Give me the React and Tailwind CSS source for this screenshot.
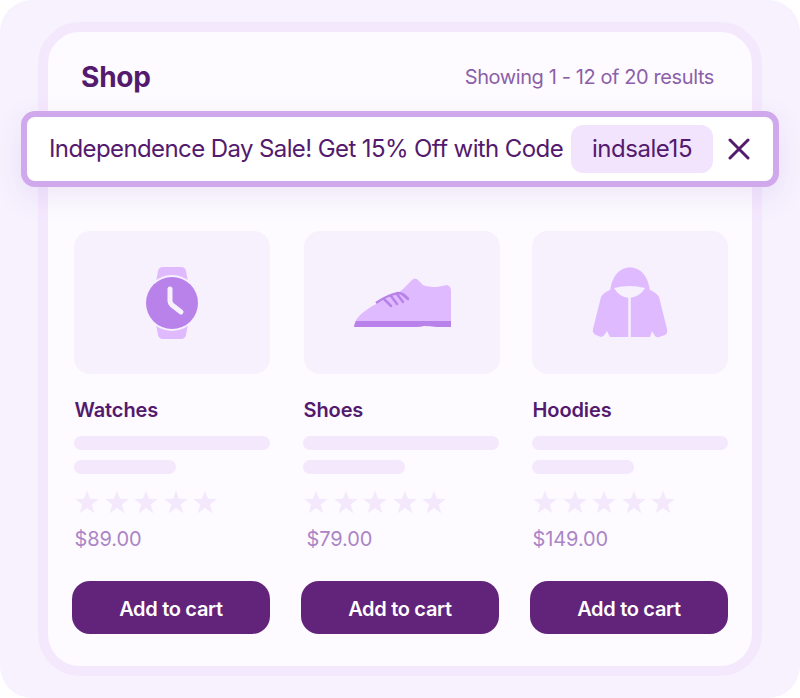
const PRODUCTS = [
  { name: 'Watches', price: '$89.00', icon: <WatchIcon />, tile: 'ml-[2px]', priceClass: 'ml-[2.5px]' },
  { name: 'Shoes', price: '$79.00', icon: <ShoeIcon />, tile: 'ml-[3px]', priceClass: 'ml-[5.5px]' },
  { name: 'Hoodies', price: '$149.00', icon: <HoodieIcon />, tile: 'ml-[2px]', priceClass: 'ml-[2.5px]' },
]

function WatchIcon() {
  return (
    <svg viewBox="142 264 60 76" className="w-[60px] h-[76px]">
      <path d="M156 281 L158 270 Q159 266 163 266 L181 266 Q185 266 186 270 L188 281 Z" fill="#dfbaff" />
      <path d="M156 323 L158 334 Q159 338 163 338 L181 338 Q185 338 186 334 L188 323 Z" fill="#dfbaff" />
      <circle cx="172" cy="302" r="28" fill="#f7f1fe" />
      <circle cx="172" cy="302" r="26" fill="#b982ea" />
      <path d="M170 288 L170 300 Q170 302 172 304 L181 311" fill="none" stroke="#f7f1fe" strokeWidth="5" strokeLinecap="round" strokeLinejoin="round" />
    </svg>
  )
}

function ShoeIcon() {
  return (
    <svg viewBox="352 276 101 52" className="w-[101px] h-[52px]">
      <path d="M355 321 Q358 315 365 310 Q370 306 376 303 L398 292 L403 288 L412 279 Q415 276 418 279 L423 284 Q428 286 437 286 L447 284 Q451 285 451 290 L451 321 Z" fill="#dfbaff" />
      <path d="M354 326 Q354 323 356 320 L451 320 L451 326 L436 326 Q430 325 424 325 Q421 326 416 326 Z" fill="#b982ea" />
      <path d="M376 302 Q388 294 398 292 Q404 292 408 298" fill="none" stroke="#b982ea" strokeWidth="2.5" />
      <path d="M384 298 L391 305 M391 295 L397 303 M397 293 L403 301 M402 293 L408 298" fill="none" stroke="#b982ea" strokeWidth="2.5" strokeLinecap="round" />
    </svg>
  )
}

function HoodieIcon() {
  return (
    <svg viewBox="590 264 80 76" className="w-[80px] h-[76px]">
      <path d="M610 292 C611 276 619 266.5 630 266.5 C641 266.5 649 276 650 292 Z" fill="#dfbaff" />
      <path d="M612 288 Q604 291 601 296 L593 328 Q592 332 596 334 L601 336 Q603 336 605 333 L607 330 L610 336 L650 336 L652 330 L655 335 Q657 337 659 336 L665 334 Q668 332 667 328 L659 296 Q656 291 648 288 Z" fill="#dfbaff" />
      <path d="M614 287 Q630 283 645 287 Q640 296 629 297 Q619 296 614 287 Z" fill="#f7f1fe" />
      <path d="M629.5 296 L629.5 336" stroke="#f7f1fe" strokeWidth="2.5" />
    </svg>
  )
}

function Star() {
  return (
    <svg viewBox="0 0 24 24" className="w-[24px] h-[24px]" fill="#f4e8fd">
      <path d="M12 0.5 L15 8.8 L23.8 9 L16.8 14.5 L19.3 23.2 L12 18.1 L4.7 23.2 L7.2 14.5 L0.2 9 L9 8.8 Z" />
    </svg>
  )
}

export default function App() {
  return (
    <div className="w-[800px] h-[698px] rounded-[32px] overflow-hidden bg-[#f7f2fe] px-[38px] pt-[22px] text-[#531a6e]" style={{ fontFamily: 'Inter, sans-serif' }}>
      <div className="h-[654px] rounded-[42px] border-[10px] border-[#f4e8fd] bg-[#fdfbff]">
        {/* Header */}
        <div className="flex items-center justify-between h-[79px] pt-[11px] pl-[33px] pr-[38px]">
          <h1 className="text-[28px] leading-[30px] font-bold tracking-[-0.2px]">Shop</h1>
          <p className="text-[20px] leading-[28px] font-normal tracking-[-0.4px] text-[#8c5fa8]">Showing 1 - 12 of 20 results</p>
        </div>

        {/* Sale banner */}
        <div className="relative z-10 flex items-center h-[76px] -mx-[27px] pl-[22px] border-[6px] border-[#d0a8ec] rounded-[14px] bg-white shadow-[0_10px_30px_rgba(120,60,190,0.10)]">
          <span className="w-[514px] text-[24px] leading-[32px] tracking-[-0.6px] whitespace-nowrap">Independence Day Sale! Get 15% Off with Code</span>
          <span className="ml-[8px] flex items-center justify-center w-[142px] h-[48px] rounded-[12px] bg-[#f2e4fd] text-[24px] leading-[32px] tracking-[-0.45px]">indsale15</span>
          <svg viewBox="0 0 22 22" className="ml-[15px] w-[22px] h-[22px]" fill="none" stroke="#531a6e" strokeWidth="3" strokeLinecap="round">
            <path d="M2 2 L20 20 M20 2 L2 20" />
          </svg>
        </div>

        {/* Products */}
        <div className="grid grid-cols-[198px_198px_198px] gap-x-[31px] mt-[44px] px-[24px]">
          {PRODUCTS.map((p) => (
            <div key={p.name} className="flex flex-col">
              <div className={`flex items-center justify-center w-[196px] h-[143px] rounded-[16px] bg-[#f7f1fe] ${p.tile}`}>
                {p.icon}
              </div>
              <h2 className="mt-[22px] ml-[2.5px] text-[20px] leading-[28px] font-semibold tracking-[-0.1px]">{p.name}</h2>
              <div className="mt-[12px] ml-[2px] w-[196px] h-[14px] rounded-full bg-[#f4e8fd]" />
              <div className="mt-[10px] ml-[2px] w-[102px] h-[14px] rounded-full bg-[#f4e8fd]" />
              <div className="mt-[16px] ml-[3px] flex gap-[5.5px]">
                <Star /><Star /><Star /><Star /><Star />
              </div>
              <p className={`mt-[11px] text-[20px] leading-[28px] tracking-[-0.1px] text-[#ab85c5] ${p.priceClass}`}>{p.price}</p>
              <button className="mt-[28px] h-[53px] pt-[2px] rounded-[18px] bg-[#62237a] text-white text-[20px] font-semibold tracking-[-0.3px]">
                Add to cart
              </button>
            </div>
          ))}
        </div>
      </div>
    </div>
  )
}
